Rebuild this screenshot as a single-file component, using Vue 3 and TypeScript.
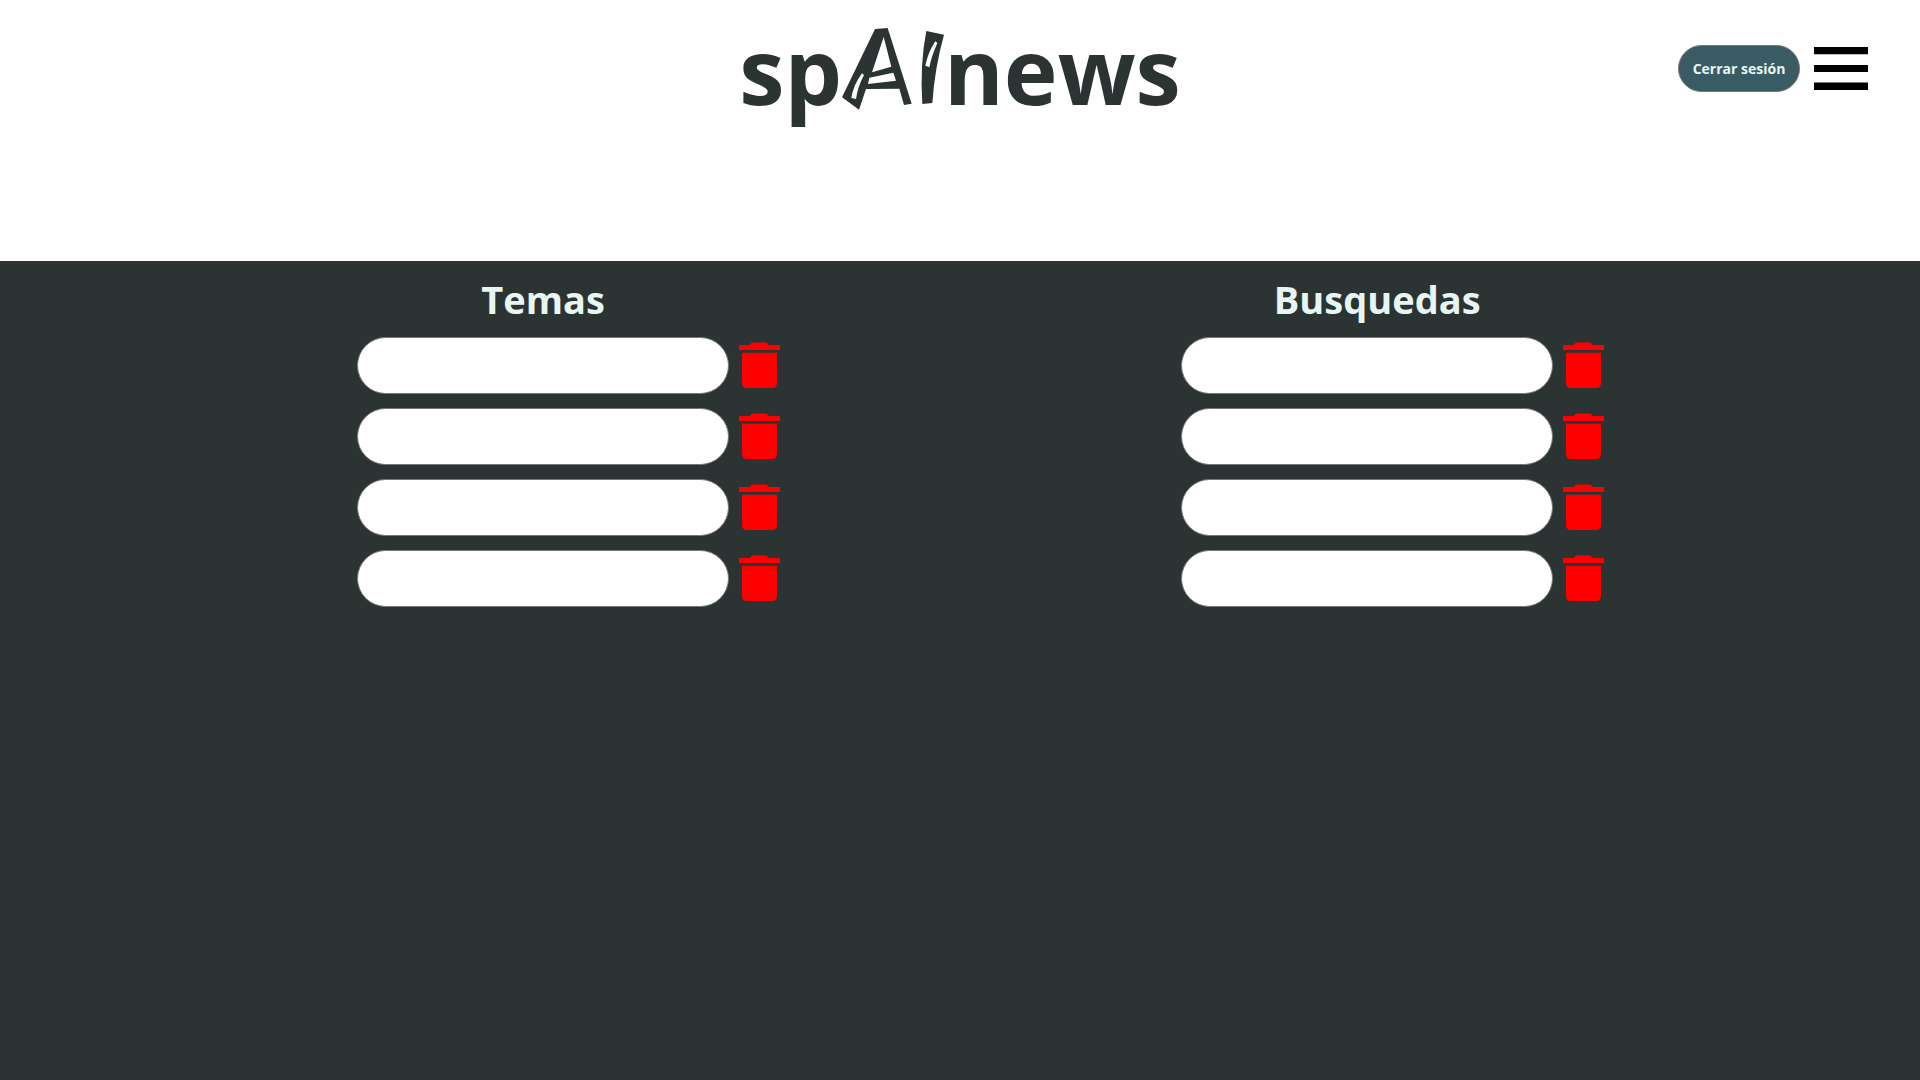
<script setup lang="ts">
import { reactive } from 'vue'

interface Column {
  id: string
  title: string
  items: string[]
}

const columns = reactive<Column[]>([
  { id: 'temas', title: 'Temas', items: ['', '', '', ''] },
  { id: 'busquedas', title: 'Busquedas', items: ['', '', '', ''] },
])

function clearItem(column: Column, index: number): void {
  column.items[index] = ''
}
</script>

<template>
  <div class="page">
    <header class="header">
      <h1 class="logo">
        <span>sp</span>
        <svg class="logo-mark" viewBox="36 33 306 258" role="img" aria-label="AI">
          <path
            fill-rule="evenodd"
            d="M135 42L173 39L245 266L222 270L208 221L108 222L87 284L36 247ZM161 66L126 172L184 155ZM118 188L190 173L198 197L114 207ZM96 175L102 180Q84 213 78 252L64 249Q70 210 96 175Z"
          />
          <path
            fill-rule="evenodd"
            d="M289 48L342 59Q314 160 307 264L277 267Q269 150 289 48ZM316 79Q294 112 286 152L298 157Q304 125 322 84Z"
          />
        </svg>
        <span>news</span>
      </h1>
      <div class="actions">
        <button class="logout" type="button">Cerrar sesión</button>
        <button class="menu" type="button" aria-label="Menú">
          <svg viewBox="0 0 54 43" aria-hidden="true">
            <path d="M0 0H54V7.3H0ZM0 18H54V25H0ZM0 35.6H54V43H0Z" />
          </svg>
        </button>
      </div>
    </header>

    <main class="content">
      <section v-for="column in columns" :key="column.id" class="column" :class="column.id">
        <h2 class="title">{{ column.title }}</h2>
        <ul class="list">
          <li v-for="(_, index) in column.items" :key="index" class="row">
            <input
              v-model="column.items[index]"
              class="field"
              type="text"
              :aria-label="`${column.title} ${index + 1}`"
            />
            <button
              class="remove"
              type="button"
              :aria-label="`Borrar ${column.title} ${index + 1}`"
              @click="clearItem(column, index)"
            >
              <svg viewBox="0 0 41 47" aria-hidden="true">
                <path
                  d="M0 3H10.500L13 .4H27.500L30 3H41V8H0ZM3 10.700H38V41Q38 46 33 46H8Q3 46 3 41Z"
                />
              </svg>
            </button>
          </li>
        </ul>
      </section>
    </main>
  </div>
</template>

<style>
body {
  margin: 0;
  background: #2c3333;
}
</style>

<style scoped>
.page {
  min-height: 100vh;
  font-family: 'Open Sans', 'Noto Sans', sans-serif;
  color: #e7f6f2;
}

.header {
  box-sizing: border-box;
  min-height: 261px;
  display: grid;
  grid-template-columns: 1fr auto 1fr;
  align-items: start;
  padding: 6px 52px 0;
  background: #fff;
}

.logo {
  grid-column: 2;
  display: flex;
  margin: 0;
  font-size: 91px;
  line-height: 128px;
  font-weight: 700;
  color: #2c3333;
}

.logo-mark {
  width: 102px;
  height: 86px;
  margin-top: 20px;
  fill: #2c3333;
}

.actions {
  display: flex;
  justify-content: flex-end;
  align-items: center;
  gap: 14px;
  padding-top: 39px;
}

.logout {
  box-sizing: border-box;
  width: 122px;
  height: 47px;
  padding: 0;
  border: 1px solid #767676;
  border-radius: 24px;
  background: #395b64;
  color: #e7f6f2;
  font-family: inherit;
  font-size: 14px;
  font-weight: 700;
}

.menu,
.remove {
  padding: 0;
  border: 0;
  background: none;
  cursor: pointer;
}

.menu svg {
  display: block;
  width: 54px;
  height: 43px;
}

.content {
  display: grid;
  grid-template-columns: 1fr 1fr;
  padding: 14px 6% 0 8.15%;
}

.column {
  width: 423px;
  margin: 0 auto;
}

.title {
  width: 372px;
  margin: 0 0 14px;
  font-size: 38px;
  line-height: 48px;
  font-weight: 700;
  text-align: center;
}

.busquedas .title {
  width: 392px;
}

.list {
  display: flex;
  flex-direction: column;
  gap: 14px;
  margin: 0;
  padding: 0;
  list-style: none;
}

.row {
  display: flex;
  align-items: center;
  justify-content: space-between;
}

.field {
  box-sizing: border-box;
  width: 372px;
  height: 57px;
  padding: 0 24px;
  border: 1px solid #767676;
  border-radius: 29px;
  background: #fff;
  color: #2c3333;
  font-family: inherit;
  font-size: 16px;
}

.remove svg {
  display: block;
  width: 41px;
  height: 47px;
  fill: #f00;
}
</style>
